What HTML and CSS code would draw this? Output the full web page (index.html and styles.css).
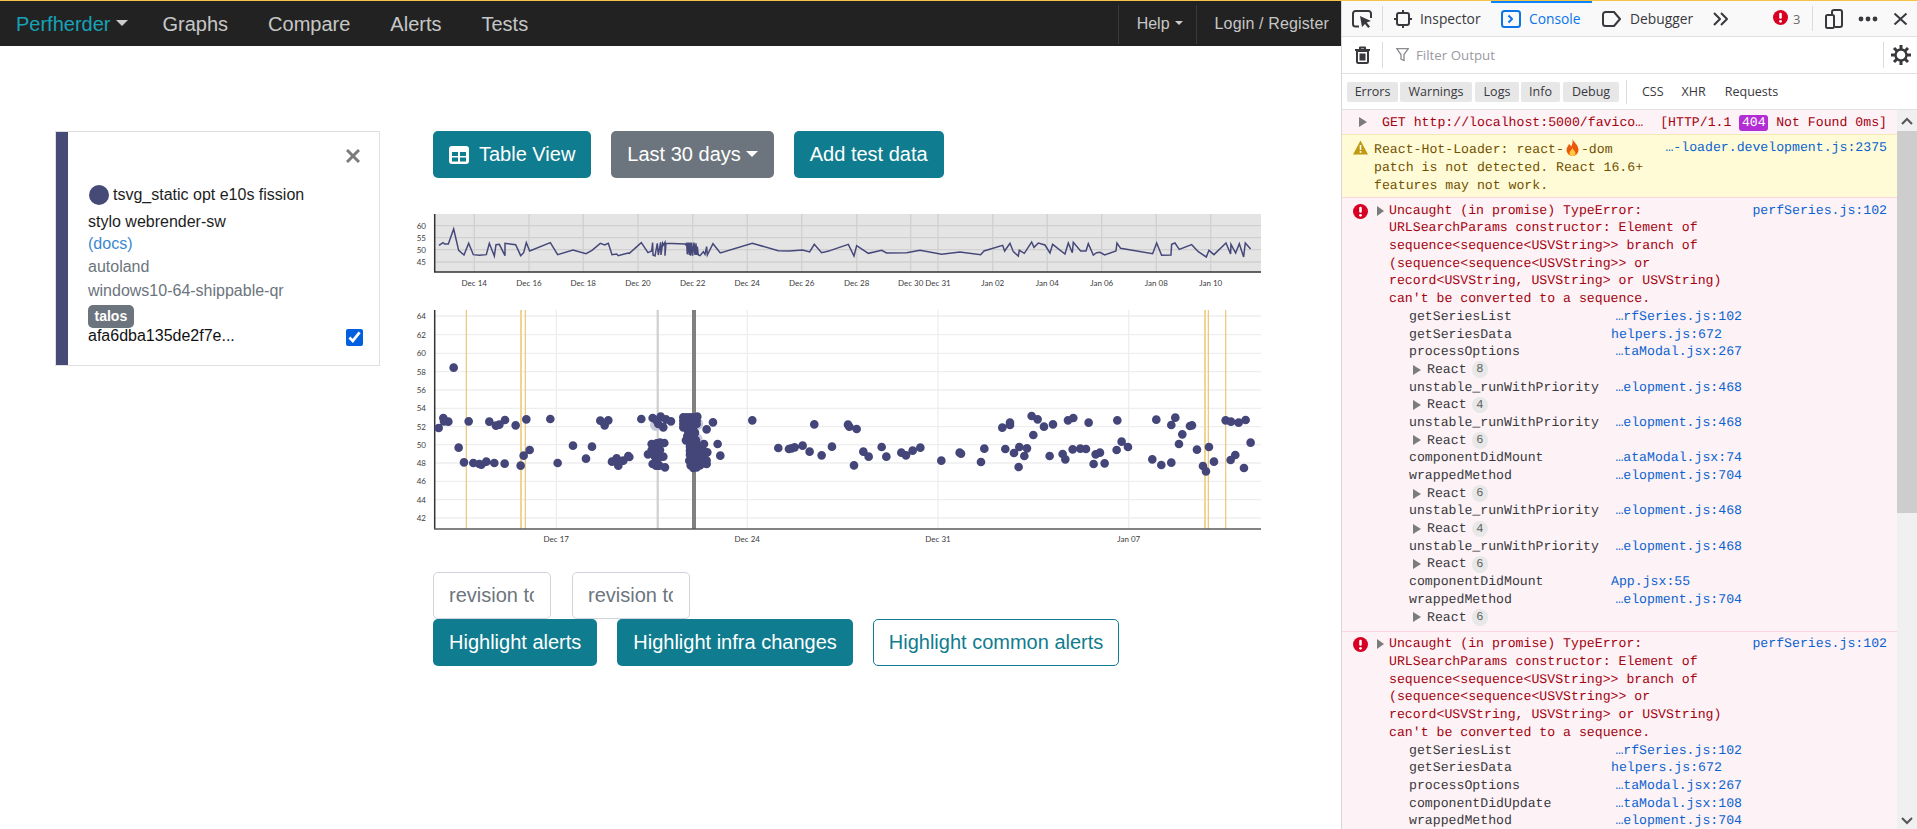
FILE: index.html
```html
<!DOCTYPE html>
<html lang="en">
<head>
<meta charset="utf-8">
<title>Perfherder Graphs</title>
<link rel="stylesheet" href="styles.css">
</head>
<body>
<div class="app">
  <div class="page">
    <nav class="navbar">
      <a class="brand">Perfherder<i class="caret"></i></a>
      <a class="nav-link">Graphs</a>
      <a class="nav-link">Compare</a>
      <a class="nav-link">Alerts</a>
      <a class="nav-link">Tests</a>
      <div class="nav-right">
        <a class="nav-small help">Help<i class="caret caret-sm"></i></a>
        <a class="nav-small login">Login / Register</a>
      </div>
    </nav>
    <main class="content">
      <aside class="card">
        <div class="stripe"></div>
        <div class="card-body">
          <div class="close-row">
            <svg class="close" viewBox="0 0 14 14"><path d="M1 1L13 13M13 1L1 13"/></svg>
          </div>
          <div class="title-row"><span class="dot"></span><span>tsvg_static opt e10s fission</span></div>
          <div class="line-a">stylo webrender-sw</div>
          <div class="line-b link">(docs)</div>
          <div class="line-c muted">autoland</div>
          <div class="line-c muted">windows10-64-shippable-qr</div>
          <div class="badge-row"><span class="badge">talos</span></div>
          <div class="hash-row"><span>afa6dba135de2f7e...</span><input class="check" type="checkbox" checked></div>
        </div>
      </aside>
      <section class="graphs">
        <div class="btn-row">
          <button class="btn teal icon-btn"><svg class="table-icon" viewBox="0 0 20 18"><rect width="20" height="18" rx="3" fill="#fff"/><rect x="3" y="6" width="6" height="4" fill="#0f7c8f"/><rect x="11" y="6" width="6" height="4" fill="#0f7c8f"/><rect x="3" y="11.5" width="6" height="4" fill="#0f7c8f"/><rect x="11" y="11.5" width="6" height="4" fill="#0f7c8f"/></svg>Table View</button>
          <button class="btn grey">Last 30 days<i class="caret caret-btn"></i></button>
          <button class="btn teal">Add test data</button>
        </div>
        <svg class="overview" viewBox="410 205 860 95">
          <rect class="plot-bg" x="435" y="214" width="826" height="58"/>
          <path class="ov-grid" d="M435 225.7H1261M435 237.7H1261M435 249.7H1261M435 262H1261M474.3 214V272M529 214V272M583.3 214V272M638 214V272M692.7 214V272M747.3 214V272M801.7 214V272M856.7 214V272M910.7 214V272M938 214V272M992.7 214V272M1047.3 214V272M1101.7 214V272M1156.3 214V272M1210.7 214V272"/>
          <path class="axis" d="M434.7 214V272H1261"/>
          <g transform="translate(410 205) scale(.3333)"><polyline class="series" points="87,121 99,113 104,117 115,117 131,72 146,136 162,150 176,115 190,149 208,151 229,149 238,115 253,153 258,119 268,118 285,152 285,115 317,119 332,152 341,143 349,113 359,138 421,113 443,149 489,135 528,146 546,136 571,115 584,120 595,115 606,149 620,147 625,152 640,148 655,144 658,145 694,113 714,143 725,138 728,113 729,150 735,153 742,115 745,150 752,112 753,150 758,115 760,120 765,112 765,152 768,115 825,117 828,120 830,113 832,148 835,113 838,150 840,113 842,152 845,113 848,152 852,113 855,150 858,115 860,150 862,125 865,150 870,152 880,140 885,148 890,125 892,150 909,116 931,144 1027,115 1105,137 1137,138 1178,135 1199,141 1213,118 1235,143 1260,137"/></g>
          <g transform="translate(830 205) scale(.3333)"><polyline class="series" points="0,137 55,118 72,153 80,122 115,145 155,136 170,144 230,143 270,136 335,148 390,141 452,149 462,138 518,121 524,138 540,115 550,140 565,153 568,136 583,145 605,111 612,127 625,114 645,120 660,144 668,118 705,147 715,114 727,143 730,112 752,138 768,138 775,116 790,150 800,143 810,142 824,150 858,138 861,114 872,130 968,146 980,114 995,151 1023,150 1025,118 1035,114 1048,133 1085,119 1105,140 1129,156 1137,136 1152,149 1188,114 1202,147 1203,118 1217,144 1228,116 1241,156 1246,114 1262,132"/></g>
          <g class="tick end"><text x="426" y="228.7">60</text><text x="426" y="240.7">55</text><text x="426" y="252.7">50</text><text x="426" y="265">45</text></g>
          <g class="tick mid"><text x="474.3" y="286">Dec 14</text><text x="529" y="286">Dec 16</text><text x="583.3" y="286">Dec 18</text><text x="638" y="286">Dec 20</text><text x="692.7" y="286">Dec 22</text><text x="747.3" y="286">Dec 24</text><text x="801.7" y="286">Dec 26</text><text x="856.7" y="286">Dec 28</text><text x="910.7" y="286">Dec 30</text><text x="938" y="286">Dec 31</text><text x="992.7" y="286">Jan 02</text><text x="1047.3" y="286">Jan 04</text><text x="1101.7" y="286">Jan 06</text><text x="1156.3" y="286">Jan 08</text><text x="1210.7" y="286">Jan 10</text></g>
        </svg>
        <svg class="main-chart" viewBox="410 300 860 250">
          <path class="grid" d="M435 316H1261M435 334.7H1261M435 353.3H1261M435 371.7H1261M435 390H1261M435 408.3H1261M435 426.7H1261M435 444.7H1261M435 463H1261M435 481.3H1261M435 499.7H1261M435 518H1261M556.3 310V529M747.3 310V529M938 310V529M1128.7 310V529"/>
          <path class="mark-y" d="M466.3 310V529M525.3 310V529M1208.3 310V529M1225.7 310V529"/>
          <path class="mark-y-wide" d="M521 310V529M1205 310V529"/>
          <path class="mark-g" d="M657.7 310V529"/>
          <path class="mark-d" d="M694 310V529"/>
          <path class="axis" d="M434.7 310V529"/>
          <path class="axis-b" d="M434 529H1261"/>
          <g transform="translate(410 300) scale(.3333)">
            <path class="halo" d="M738 375h.01M862 372h.01M860 418h.01"/>
            <path class="dots" d="M86 384h.01M100 354h.01M102 364h.01M115 365h.01M131 203h.01M146 443h.01M162 487h.01M176 364h.01M190 489h.01M208 492h.01M214 494h.01M229 485h.01M238 365h.01M253 489h.01M258 377h.01M268 374h.01M285 360h.01M284 491h.01M317 376h.01M332 497h.01M341 467h.01M349 358h.01M359 450h.01M421 357h.01M443 489h.01M489 437h.01M528 476h.01M546 440h.01M571 362h.01M584 376h.01M595 361h.01M606 485h.01M620 475h.01M625 497h.01M640 482h.01M655 468h.01M658 471h.01M694 357h.01M728 354h.01M740 362h.01M752 350h.01M760 382h.01M768 358h.01M783 364h.01M745 372h.01M725 432h.01M740 430h.01M750 428h.01M763 429h.01M714 463h.01M725 450h.01M735 445h.01M745 455h.01M750 450h.01M760 470h.01M735 470h.01M745 475h.01M728 492h.01M738 497h.01M748 497h.01M765 502h.01M740 485h.01
            M820 352h.01M830 352h.01M840 352h.01M850 352h.01M862 350h.01M820 362h.01M830 362h.01M840 362h.01M850 362h.01M860 362h.01M820 372h.01M830 372h.01M840 372h.01M850 372h.01M860 372h.01M820 382h.01M830 382h.01M840 382h.01M850 382h.01M835 395h.01M845 395h.01M855 398h.01M832 408h.01M842 408h.01M852 408h.01M828 421h.01M838 421h.01M848 421h.01M858 421h.01
            M840 440h.01M850 436h.01M860 438h.01M870 440h.01M840 452h.01M850 452h.01M860 452h.01M870 452h.01M880 452h.01M840 464h.01M850 464h.01M860 464h.01M870 464h.01M880 464h.01M838 482h.01M848 476h.01M858 476h.01M868 476h.01M878 476h.01M890 482h.01M842 496h.01M852 490h.01M862 490h.01M872 490h.01M882 490h.01M890 492h.01M850 504h.01M860 502h.01M870 496h.01
            M890 388h.01M909 367h.01M882 432h.01M923 432h.01M892 457h.01M931 467h.01M1027 361h.01M1105 444h.01M1137 447h.01M1145 445h.01M1154 442h.01M1178 437h.01M1199 455h.01M1213 373h.01M1235 466h.01M1266 440h.01"/>
          </g>
          <g transform="translate(840 300) scale(.3333)">
            <path class="dots" d="M24 374h.01M28 380h.01M50 387h.01M42 496h.01M70 455h.01M86 470h.01M125 441h.01M139 470h.01M184 458h.01M198 466h.01M218 452h.01M241 443h.01M304 482h.01M359 458h.01M363 461h.01M423 486h.01M433 446h.01M487 383h.01M510 368h.01M510 375h.01M496 447h.01M522 459h.01M538 441h.01M536 501h.01M553 468h.01M561 445h.01M575 348h.01M593 358h.01M580 405h.01M612 380h.01M639 373h.01M629 468h.01M668 462h.01M676 478h.01M684 361h.01M700 354h.01M698 448h.01M721 446h.01M738 447h.01M746 368h.01M761 492h.01M767 463h.01M780 458h.01M794 490h.01M830 450h.01M832 361h.01M845 425h.01M864 441h.01M937 478h.01M949 359h.01M964 495h.01M994 488h.01M994 375h.01M1006 353h.01M1017 432h.01M1027 403h.01M1050 378h.01M1056 376h.01M1071 449h.01M1089 498h.01M1098 514h.01M1107 441h.01M1122 485h.01M1157 361h.01M1173 365h.01M1196 368h.01M1217 360h.01M1172 480h.01M1186 465h.01M1212 504h.01M1232 428h.01"/>
          </g>
          <g class="tick end"><text x="426" y="319">64</text><text x="426" y="337.7">62</text><text x="426" y="356.3">60</text><text x="426" y="374.7">58</text><text x="426" y="393">56</text><text x="426" y="411.3">54</text><text x="426" y="429.7">52</text><text x="426" y="447.7">50</text><text x="426" y="466">48</text><text x="426" y="484.3">46</text><text x="426" y="502.7">44</text><text x="426" y="521">42</text></g>
          <g class="tick mid"><text x="556.3" y="542">Dec 17</text><text x="747.3" y="542">Dec 24</text><text x="938" y="542">Dec 31</text><text x="1128.7" y="542">Jan 07</text></g>
        </svg>
        <div class="inputs">
          <input class="rev" type="text" placeholder="revision to">
          <input class="rev" type="text" placeholder="revision to">
        </div>
        <div class="btn-row">
          <button class="btn teal">Highlight alerts</button>
          <button class="btn teal">Highlight infra changes</button>
          <button class="btn outline">Highlight common alerts</button>
        </div>
      </section>
    </main>
  </div>

  <div class="devtools">
    <div class="dt-tabs">
      <svg class="dt-pick" viewBox="0 0 20 18"><path class="ic" d="M7 16.5H3.5A2.5 2.5 0 0 1 1 14V3.5A2.5 2.5 0 0 1 3.5 1h13A2.5 2.5 0 0 1 19 3.5V8"/><path class="icf" d="M8 6l11 5-4.3 1.4 3.3 4-1.8 1.5-3.2-4-3 3z"/></svg>
      <span class="dt-sep"></span>
      <div class="tab tab-first"><svg class="tab-ic" viewBox="0 0 18 18"><rect class="ic" x="3" y="3" width="12" height="12" rx="2"/><path class="ic" d="M0 9h3M15 9h3M9 0v3M9 15v3"/></svg>Inspector</div>
      <div class="tab tab-on"><i class="tab-line"></i><svg class="tab-ic wide" viewBox="0 0 20 18"><rect class="ic-b" x="1" y="1" width="18" height="16" rx="2.5"/><path class="ic-b" d="M7.5 5.5L11 9l-3.500 3.500"/></svg>Console</div>
      <div class="tab"><svg class="tab-ic wide" viewBox="0 0 20 18"><path class="ic" d="M3.500 2H12l6 7-6 7H3.500A2.500 2.500 0 0 1 1 13.500v-9A2.500 2.500 0 0 1 3.500 2z"/></svg>Debugger</div>
      <svg class="dt-more" viewBox="0 0 17 14"><path class="ic" d="M2 1l6 6-6 6M9 1l6 6-6 6"/></svg>
      <svg class="dt-err" viewBox="0 0 15 15"><circle cx="7.500" cy="7.500" r="7.500" fill="#d70022"/><rect x="6.200" y="2.800" width="2.600" height="6" rx="1.200" fill="#fff"/><circle cx="7.500" cy="11.300" r="1.400" fill="#fff"/></svg>
      <span class="dt-count">3</span>
      <span class="dt-sep sep2"></span>
      <svg class="dt-dock" viewBox="0 0 18 20"><path class="ic" d="M7 5V3a2 2 0 0 1 2-2h6a2 2 0 0 1 2 2v13a2 2 0 0 1-2 2h-5"/><rect class="ic" x="1" y="6" width="8" height="13" rx="1.500"/></svg>
      <svg class="dt-dots" viewBox="0 0 20 6"><circle cx="3" cy="3" r="2.400"/><circle cx="10" cy="3" r="2.400"/><circle cx="17" cy="3" r="2.400"/></svg>
      <svg class="dt-x" viewBox="0 0 15 12"><path class="ic" d="M1.500 .5l12 11M13.500 .5l-12 11"/></svg>
    </div>
    <div class="dt-filter">
      <svg class="dt-trash" viewBox="0 0 15 18"><path class="ic" d="M2 5h11v10.500a1.500 1.500 0 0 1-1.500 1.500h-8A1.500 1.500 0 0 1 2 15.500zM0 4h15M5 4V1.500h5V4M5.500 7.500v7M7.500 7.500v7M9.500 7.500v7"/></svg>
      <span class="dt-sep sep3"></span>
      <svg class="dt-funnel" viewBox="0 0 13 14"><path d="M.7.700h11.600L8 6.500v6L5 11V6.500z"/></svg>
      <span class="filter-text">Filter Output</span>
      <span class="dt-sep sep4"></span>
      <svg class="dt-gear" viewBox="0 0 20 20"><path class="gear-t" d="M10 0v20M0 10h20M3 3l14 14M17 3L3 17"/><circle class="gear-c" cx="10" cy="10" r="5.500"/></svg>
    </div>
    <div class="dt-levels">
      <span class="chip c1">Errors</span><span class="chip c2">Warnings</span><span class="chip c3">Logs</span><span class="chip c4">Info</span><span class="chip c5">Debug</span>
      <span class="dt-sep sep5"></span>
      <span class="lvl l1">CSS</span><span class="lvl l2">XHR</span><span class="lvl l3">Requests</span>
    </div>
    <div class="dt-output">
      <div class="dt-messages">
        <div class="msg net"><i class="tri tri-net"></i><span class="net-a">GET http://localhost:5000/favico…</span><span class="net-b">[HTTP/1.1 <b class="s404">404</b> Not Found 0ms]</span></div>
        <div class="msg warn">
          <svg class="warn-ic" viewBox="0 0 15 15"><path d="M7.500.500L15 14.500H0z" fill="#c09a10"/><rect x="6.700" y="5" width="1.600" height="5" fill="#fff"/><rect x="6.700" y="11" width="1.600" height="1.800" fill="#fff"/></svg>
          <div class="msg-text w-text">React-Hot-Loader: react-<svg class="fire" viewBox="0 0 14 18"><path d="M7 0c1 3 6 6 6 11a6 6 0 0 1-12 0c0-3 2-4 2.500-6C5 6 5.500 7 5.500 8 6.500 6 7.500 3 7 0z" fill="#e8590c"/><path d="M7 9c.5 2 3 3 3 5a3 3 0 0 1-6 0c0-2 2.500-3 3-5z" fill="#ffc83d"/></svg>-dom patch is not detected. React 16.6+ features may not work.</div>
          <a class="src">…-loader.development.js:2375</a>
        </div>
        <div class="msg err">
          <svg class="err-ic" viewBox="0 0 15 15"><circle cx="7.500" cy="7.500" r="7.500" fill="#d70022"/><rect x="6.200" y="2.800" width="2.600" height="6" rx="1.200" fill="#fff"/><circle cx="7.500" cy="11.300" r="1.400" fill="#fff"/></svg>
          <i class="tri tri-err"></i>
          <div class="err-body">
            <div class="err-head">
              <div class="msg-text">Uncaught (in promise) TypeError: URLSearchParams constructor: Element of sequence&lt;sequence&lt;USVString&gt;&gt; branch of (sequence&lt;sequence&lt;USVString&gt;&gt; or record&lt;USVString, USVString&gt; or USVString) can't be converted to a sequence.</div>
              <a class="src">perfSeries.js:102</a>
            </div>
            <div class="trace">
              <span>getSeriesList</span><a class="t-trim">…rfSeries.js:102</a>
              <span>getSeriesData</span><a>helpers.js:672</a>
              <span>processOptions</span><a class="t-trim">…taModal.jsx:267</a>
              <span class="react"><i class="tri"></i>React<b class="num">8</b></span>
              <span>unstable_runWithPriority</span><a class="t-trim">…elopment.js:468</a>
              <span class="react"><i class="tri"></i>React<b class="num">4</b></span>
              <span>unstable_runWithPriority</span><a class="t-trim">…elopment.js:468</a>
              <span class="react"><i class="tri"></i>React<b class="num">6</b></span>
              <span>componentDidMount</span><a class="t-trim">…ataModal.jsx:74</a>
              <span>wrappedMethod</span><a class="t-trim">…elopment.js:704</a>
              <span class="react"><i class="tri"></i>React<b class="num">6</b></span>
              <span>unstable_runWithPriority</span><a class="t-trim">…elopment.js:468</a>
              <span class="react"><i class="tri"></i>React<b class="num">4</b></span>
              <span>unstable_runWithPriority</span><a class="t-trim">…elopment.js:468</a>
              <span class="react"><i class="tri"></i>React<b class="num">6</b></span>
              <span>componentDidMount</span><a>App.jsx:55</a>
              <span>wrappedMethod</span><a class="t-trim">…elopment.js:704</a>
              <span class="react"><i class="tri"></i>React<b class="num">6</b></span>
            </div>
          </div>
        </div>
        <div class="msg err">
          <svg class="err-ic" viewBox="0 0 15 15"><circle cx="7.500" cy="7.500" r="7.500" fill="#d70022"/><rect x="6.200" y="2.800" width="2.600" height="6" rx="1.200" fill="#fff"/><circle cx="7.500" cy="11.300" r="1.400" fill="#fff"/></svg>
          <i class="tri tri-err"></i>
          <div class="err-body">
            <div class="err-head">
              <div class="msg-text">Uncaught (in promise) TypeError: URLSearchParams constructor: Element of sequence&lt;sequence&lt;USVString&gt;&gt; branch of (sequence&lt;sequence&lt;USVString&gt;&gt; or record&lt;USVString, USVString&gt; or USVString) can't be converted to a sequence.</div>
              <a class="src">perfSeries.js:102</a>
            </div>
            <div class="trace">
              <span>getSeriesList</span><a class="t-trim">…rfSeries.js:102</a>
              <span>getSeriesData</span><a>helpers.js:672</a>
              <span>processOptions</span><a class="t-trim">…taModal.jsx:267</a>
              <span>componentDidUpdate</span><a class="t-trim">…taModal.jsx:108</a>
              <span>wrappedMethod</span><a class="t-trim">…elopment.js:704</a>
              <span class="react"><i class="tri"></i>React<b class="num">6</b></span>
            </div>
          </div>
        </div>
      </div>
      <div class="scrollbar">
        <div class="sb-btn"><svg viewBox="0 0 12 8"><path d="M1 7l5-5 5 5"/></svg></div>
        <div class="sb-thumb"></div>
        <div class="sb-btn sb-down"><svg viewBox="0 0 12 8"><path d="M1 1l5 5 5-5"/></svg></div>
      </div>
    </div>
  </div>
</div>
</body>
</html>
```
FILE: styles.css
```css
* { box-sizing: border-box; }
html, body { margin: 0; height: 100%; }
body { overflow: hidden; background: #fff; font-family: "Liberation Sans", Arial, sans-serif; color: #212529; font-size: 16px; }
.app { display: flex; width: 1917px; height: 829px; border-top: 1px solid #f6c445; overflow: hidden; }

/* page */
.page { width: 1341px; flex: none; }
.navbar { display: flex; align-items: center; height: 45px; background: #222; padding: 1px 0 0 16px; font-size: 20px; }
.brand { color: #17a2b8; margin-right: 15px; }
.nav-link { color: rgba(255,255,255,.75); padding: 0 20px; }
.caret { display: inline-block; margin-left: 5px; vertical-align: 5px; border-top: 6px solid #ccc; border-left: 6px solid transparent; border-right: 6px solid transparent; }
.caret-sm { border-top-width: 4.8px; border-left-width: 4.8px; border-right-width: 4.8px; margin-left: 5px; }
.caret-btn { border-top-color: #fff; vertical-align: 4px; margin-left: 5px; }
.nav-right { margin-left: auto; display: flex; height: 39px; }
.nav-small { font-size: 16px; color: rgba(255,255,255,.75); display: flex; align-items: center; border-left: 1px solid #343a40; }
.nav-small .caret { margin-top: -3px; }
.help { padding: 0 13px 0 18px; }
.login { padding: 0 12px 0 18px; letter-spacing: .15px; }

.content { display: flex; padding: 85px 0 0 55px; }
.card { display: flex; width: 325px; height: 235px; border: 1px solid #dfdfdf; }
.stripe { width: 12px; background: #464a76; flex: none; }
.card-body { flex: 1; padding: 0 16px 0 20px; line-height: 24px; }
.close-row { display: flex; justify-content: flex-end; padding: 17px 3px 0 0; height: 50px; }
.close { width: 14px; height: 14px; }
.close path { stroke: #7c7c7c; stroke-width: 3; fill: none; }
.title-row { display: flex; align-items: center; gap: 4px; height: 26px; margin-left: 1px; color: #1d1d1d; }
.dot { width: 20px; height: 20px; border-radius: 50%; background: #464a76; }
.line-a { height: 24px; line-height: 27px; color: #1d1d1d; }
.line-b { height: 21px; }
.link { color: #3a88cf; }
.muted { color: #6c757d; }
.line-c { height: 24px; line-height: 27px; }
.badge-row { height: 22px; margin-top: 3px; }
.badge { display: inline-block; height: 23px; line-height: 22px; padding: 0 6.500px; border-radius: 5px; background: #6c757d; color: #fff; font-size: 14px; font-weight: bold; }
.hash-row { display: flex; justify-content: space-between; height: 24px; line-height: 20px; color: #111; }
.check { width: 17px; height: 17px; margin: 3px 0 0; accent-color: #0060df; }

.graphs { margin-left: 30px; width: 860px; }
.btn-row { display: flex; gap: 20px; padding-left: 23px; }
.btn { height: 47px; padding: 0 15px; font: 20px "Liberation Sans", Arial, sans-serif; border-radius: 5px; border: 1px solid transparent; color: #fff; }
.teal { background: #0f7c8f; }
.grey { background: #6c757d; }
.outline { background: #fff; border-color: #0f7c8f; color: #0f7c8f; }
.icon-btn { display: flex; align-items: center; gap: 10px; }
.table-icon { width: 20px; height: 18px; }
.overview { display: block; width: 860px; height: 95px; margin-top: 27px; }
.main-chart { display: block; width: 860px; height: 250px; }
.plot-bg { fill: #e4e4e4; }
.ov-grid { stroke: #d0d0d0; stroke-width: 1.300; fill: none; }
.axis { stroke: #333; stroke-width: 1.500; fill: none; }
.axis-b { stroke: #5a5a5a; stroke-width: 1.500; fill: none; }
.series { fill: none; stroke: #46487a; stroke-width: 4.500; stroke-linejoin: miter; }
.tick text { font: 8px Lato, "Liberation Sans", sans-serif; fill: #3c3c3c; }
.tick.end text { text-anchor: end; }
.tick.mid text { text-anchor: middle; }
.grid { stroke: #eee; stroke-width: 1.300; fill: none; }
.mark-y { stroke: #e8c26e; stroke-width: 1.100; fill: none; }
.mark-y-wide { stroke: #f0d592; stroke-width: 2; fill: none; }
.mark-g { stroke: #cfcfcf; stroke-width: 2.200; fill: none; }
.mark-d { stroke: #808080; stroke-width: 4; fill: none; }
.dots { stroke: #44467a; stroke-width: 26; stroke-linecap: round; fill: none; }
.halo { stroke: #c8c9d8; stroke-width: 36; stroke-linecap: round; fill: none; }
.inputs { display: flex; gap: 21px; padding-left: 23px; margin-top: 22px; }
.rev { width: 118px; height: 47px; padding: 0 16px 0 15px; border: 1px solid #ced4da; border-radius: 5px; font: 20px "Liberation Sans", Arial, sans-serif; color: #495057; background: #fff; }
.rev::placeholder { color: #6c757d; opacity: 1; }

/* devtools shell */
.devtools { flex: 1; min-width: 0; display: flex; flex-direction: column; border-left: 1px solid #d7d7db; background: #fff; color: #38383d; font-family: "Open Sans", "Noto Sans", sans-serif; font-size: 13px; }
.ic { fill: none; stroke: #38383d; stroke-width: 2; stroke-linejoin: round; }
.icf { fill: #38383d; }
.ic-b { fill: none; stroke: #0a74e8; stroke-width: 2; stroke-linejoin: round; }
.dt-sep { width: 1px; align-self: center; background: #dcdcde; flex: none; }
.dt-tabs { display: flex; align-items: center; height: 36px; background: #f9f9fa; border-bottom: 1px solid #e0e0e2; flex: none; }
.dt-pick { width: 20px; height: 18px; margin-left: 10px; flex: none; }
.dt-tabs > .dt-sep { height: 25px; margin-left: 10px; }
.tab { position: relative; display: flex; align-items: center; height: 35px; padding: 0 10px; gap: 8px; white-space: nowrap; font-size: 13.800px; }
.tab-first { padding-left: 11px; width: 108px; }
.tab-on { color: #0a74e8; width: 101px; }
.tab-line { position: absolute; left: 0; right: 0; top: 0; height: 2px; background: #0a84ff; }
.tab-ic { width: 18px; height: 18px; flex: none; margin-right: 0; }
.tab-ic.wide { width: 20px; }
.dt-more { width: 17px; height: 14px; margin-left: 9px; flex: none; }
.dt-err { width: 15px; height: 15px; margin-left: 44px; margin-top: -3px; flex: none; }
.dt-count { margin-left: 5px; color: #6a6a6f; font-size: 13px; }
.dt-tabs > .sep2 { margin-left: 12px; }
.dt-dock { width: 18px; height: 20px; margin-left: 12px; flex: none; }
.dt-dots { width: 20px; height: 6px; margin-left: 15px; flex: none; fill: #38383d; }
.dt-x { width: 15px; height: 12px; margin-left: 15px; flex: none; }
.dt-filter { display: flex; align-items: center; height: 37px; border-bottom: 1px solid #e0e0e2; flex: none; }
.dt-trash { width: 15px; height: 18px; margin-left: 13px; flex: none; }
.sep3 { height: 26px; margin-left: 12px; }
.dt-funnel { width: 13px; height: 14px; margin-left: 13px; flex: none; }
.dt-funnel path { fill: none; stroke: #8a8a8f; stroke-width: 1.300; }
.filter-text { margin-left: 7px; color: #9a9a9f; font-size: 13.300px; }
.sep4 { height: 26px; margin-left: auto; }
.dt-gear { width: 20px; height: 20px; margin: 0 6px 0 7px; flex: none; }
.gear-t { stroke: #38383d; stroke-width: 3; fill: none; }
.gear-c { stroke: #38383d; stroke-width: 2.400; fill: #fff; }
.dt-levels { display: flex; align-items: center; height: 36px; border-bottom: 1px solid #e0e0e2; flex: none; font-size: 12.500px; }
.chip { height: 20px; line-height: 20px; background: #e7e7e7; border-radius: 2px; text-align: center; color: #38383d; }
.c1 { width: 51px; margin-left: 5px; }
.c2 { width: 72px; margin-left: 2px; }
.c3 { width: 44px; margin-left: 3px; }
.c4 { width: 39px; margin-left: 2px; }
.c5 { width: 56px; margin-left: 3px; }
.sep5 { height: 24px; margin-left: 7px; }
.lvl { color: #38383d; }
.l1 { margin-left: 15px; }
.l2 { margin-left: 18px; }
.l3 { margin-left: 19px; }

/* output */
.dt-output { flex: 1; min-height: 0; display: flex; }
.dt-messages { flex: 1; min-width: 0; overflow: hidden; font: 13.200px/17.700px "Liberation Mono", "Courier New", monospace; text-rendering: geometricPrecision; }
.msg { display: flex; align-items: flex-start; padding: 3.600px 10px 4.600px 0; border-bottom: 1px solid #fbd6de; }
.msg a { color: #0a63d0; white-space: nowrap; }
.src { margin-left: auto; }
.msg-text { width: 340px; flex: none; }
.net { background: #fdf2f5; color: #a4000f; padding: 3.800px 10px 2.500px 17px; border-bottom-color: #f5e8b5; }
.tri { display: inline-block; border-left: 8px solid #7c7c7c; border-top: 5px solid transparent; border-bottom: 5px solid transparent; flex: none; }
.tri-net { margin: 3.500px 15px 0 0; }
.net-a { width: 277px; flex: none; }
.net-b { margin-left: auto; }
.s404 { font-weight: normal; background: #b32dd5; color: #fff; border-radius: 3px; padding: 0 2.600px; display: inline-block; line-height: 16px; }
.warn { background: #fffbd6; color: #715100; padding: 4.400px 10px 2.500px 11px; border-bottom-color: #fbd6de; }
.warn-ic { width: 15px; height: 15px; margin: 1px 6px 0 0; flex: none; }
.w-text { width: 280px; }
.fire { display: inline-block; width: 17px; height: 18px; vertical-align: -4px; }
.err { background: #fdf2f5; color: #a4000f; padding-left: 11px; }
.err-ic { width: 15px; height: 15px; margin: 2px 9px 0 0; flex: none; }
.tri-err { margin: 4px 5px 0 0; border-left-width: 7px; }
.err-body { flex: 1; min-width: 0; }
.err-head { display: flex; }
.trace { display: grid; grid-template-columns: 202px 131px; grid-auto-rows: 17.700px; margin-left: 20px; color: #38383d; }
.trace a { display: block; white-space: nowrap; }
.t-trim { text-align: right; }
.react { display: flex; align-items: center; grid-column: 1 / -1; padding-left: 4px; }
.react .tri { margin-right: 6px; }
.num { width: 16.500px; height: 16.500px; margin-left: 5px; line-height: 16.500px; border-radius: 50%; background: #e8e8e8; color: #666; font-weight: normal; font-size: 12px; text-align: center; }
.scrollbar { width: 20px; flex: none; display: flex; flex-direction: column; background: #f0f0f0; }
.sb-btn { height: 21px; display: flex; justify-content: center; align-items: center; flex: none; }
.sb-btn svg { width: 12px; height: 8px; }
.sb-btn path { fill: none; stroke: #555; stroke-width: 2; }
.sb-thumb { height: 382px; background: #cdcdcd; flex: none; }
.sb-down { margin-top: auto; height: 16px; }
```
